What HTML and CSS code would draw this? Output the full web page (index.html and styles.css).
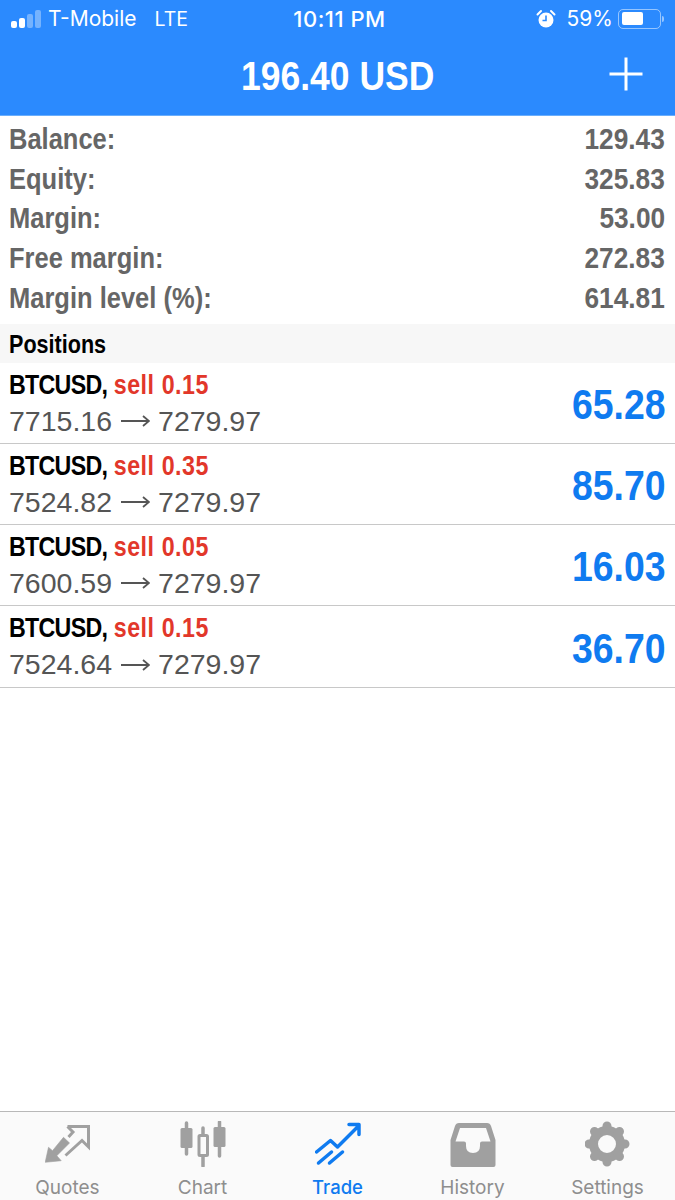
FILE: index.html
```html
<!DOCTYPE html>
<html lang="en">
<head>
  <meta charset="UTF-8" />
  <meta name="viewport" content="width=device-width, initial-scale=1.0" />
  <title>Trade</title>
  <link rel="stylesheet" href="styles.css">
</head>
<body>
  <header class="top">
    <div class="status">
      <div class="status-left">
        <span class="signal"><i class="on"></i><i class="on"></i><i></i><i></i></span>
        <span class="carrier">T-Mobile</span>
        <span class="net">LTE</span>
      </div>
      <div class="clock">10:11 PM</div>
      <div class="status-right">
        <svg class="alarm" width="20" height="20" viewBox="0 0 20 20">
          <circle cx="10" cy="11" r="7.5" fill="#fff"/>
          <path d="M1.5 5.5 L5 2 M18.5 5.5 L15 2" stroke="#fff" stroke-width="2" stroke-linecap="round"/>
          <path d="M10 6.5 V11.5 H6.5" stroke="#2b8afe" stroke-width="1.6" fill="none"/>
        </svg>
        <span class="pct">59%</span>
        <span class="battery"><span class="battery-fill"></span></span>
        <span class="battery-cap"></span>
      </div>
    </div>
    <div class="title-row">
      <h1>196.40 USD</h1>
      <svg class="plus" width="34" height="34" viewBox="0 0 34 34">
        <path d="M17 0.5 V33.5 M0.5 17 H33.5" stroke="#fff" stroke-width="3"/>
      </svg>
    </div>
  </header>

  <section class="summary">
    <div class="sum-row"><span class="sum-label">Balance:</span><span class="sum-value">129.43</span></div>
    <div class="sum-row"><span class="sum-label">Equity:</span><span class="sum-value">325.83</span></div>
    <div class="sum-row"><span class="sum-label">Margin:</span><span class="sum-value">53.00</span></div>
    <div class="sum-row"><span class="sum-label">Free margin:</span><span class="sum-value">272.83</span></div>
    <div class="sum-row"><span class="sum-label">Margin level (%):</span><span class="sum-value">614.81</span></div>
  </section>

  <div class="section-head"><span>Positions</span></div>

  <section class="positions">
    <div class="pos">
      <div class="pos-info">
        <div class="pos-title"><span class="symbol">BTCUSD,</span> <span class="sell">sell 0.15</span></div>
        <div class="pos-price">7715.16<svg class="arrow" width="30" height="14" viewBox="0 0 30 14"><path d="M1 7 H29 M23 2 L29 7 L23 12" fill="none" stroke="#555" stroke-width="1.800"/></svg>7279.97</div>
      </div>
      <div class="profit">65.28</div>
    </div>
    <div class="pos">
      <div class="pos-info">
        <div class="pos-title"><span class="symbol">BTCUSD,</span> <span class="sell">sell 0.35</span></div>
        <div class="pos-price">7524.82<svg class="arrow" width="30" height="14" viewBox="0 0 30 14"><path d="M1 7 H29 M23 2 L29 7 L23 12" fill="none" stroke="#555" stroke-width="1.800"/></svg>7279.97</div>
      </div>
      <div class="profit">85.70</div>
    </div>
    <div class="pos">
      <div class="pos-info">
        <div class="pos-title"><span class="symbol">BTCUSD,</span> <span class="sell">sell 0.05</span></div>
        <div class="pos-price">7600.59<svg class="arrow" width="30" height="14" viewBox="0 0 30 14"><path d="M1 7 H29 M23 2 L29 7 L23 12" fill="none" stroke="#555" stroke-width="1.800"/></svg>7279.97</div>
      </div>
      <div class="profit">16.03</div>
    </div>
    <div class="pos">
      <div class="pos-info">
        <div class="pos-title"><span class="symbol">BTCUSD,</span> <span class="sell">sell 0.15</span></div>
        <div class="pos-price">7524.64<svg class="arrow" width="30" height="14" viewBox="0 0 30 14"><path d="M1 7 H29 M23 2 L29 7 L23 12" fill="none" stroke="#555" stroke-width="1.800"/></svg>7279.97</div>
      </div>
      <div class="profit">36.70</div>
    </div>
  </section>

  <nav class="tabs">
    <div class="tab">
      <svg width="46" height="46" viewBox="0 0 46 46">
        <path d="M0.200 41.300 L3.500 26.300 L7.500 29.700 L18.500 16.300 L24.500 22 L11.800 34.700 L16.200 39.700 Z" fill="#a0a0a0" stroke="#a0a0a0" stroke-width="0.600"/>
        <path d="M22.500 5.500 H43.500 V26 L37 19.500 L20.500 34.500 M22.500 5.500 L28 11 L23.500 16" fill="none" stroke="#a0a0a0" stroke-width="3"/>
      </svg>
      <span>Quotes</span>
    </div>
    <div class="tab">
      <svg width="46" height="46" viewBox="0 0 46 46">
        <path d="M6.500 2 V33 M39.500 1 V35 M23 7 V45" stroke="#a0a0a0" stroke-width="3.500" stroke-linecap="round"/>
        <rect x="0.500" y="7" width="12" height="20" rx="1.500" fill="#a0a0a0"/>
        <rect x="33.500" y="6" width="12" height="20" rx="1.500" fill="#a0a0a0"/>
        <rect x="19" y="14.500" width="8.500" height="20" rx="1" fill="#fafafa" stroke="#a0a0a0" stroke-width="3"/>
      </svg>
      <span>Chart</span>
    </div>
    <div class="tab active">
      <svg width="46" height="46" viewBox="0 0 46 46">
        <path d="M1.500 31 L15.500 19.500 L22.500 26 L43 5.500 M34 3.500 H44 V13.500" stroke="#0f7bf0" stroke-width="3.500" fill="none" stroke-linecap="round" stroke-linejoin="round"/>
        <path d="M3.500 42 L16.500 31 M14.500 42 L27.500 31" stroke="#0f7bf0" stroke-width="3.500" fill="none" stroke-linecap="round"/>
      </svg>
      <span>Trade</span>
    </div>
    <div class="tab">
      <svg width="46" height="46" viewBox="0 0 46 46">
        <path fill-rule="evenodd" fill="#a0a0a0" d="M9 2 H37 Q40 2 41 5 L45.500 19 V44 Q45.500 46 43.500 46 H2.500 Q0.500 46 0.500 44 V19 L5 5 Q6 2 9 2 Z M10 7 L5.500 20.500 H14 Q16 20.500 16 22.500 V25 Q16 32 23 32 Q30 32 30 25 V22.500 Q30 20.500 32 20.500 H40.500 L36 7 Z"/>
      </svg>
      <span>History</span>
    </div>
    <div class="tab">
      <svg width="46" height="46" viewBox="0 0 46 46">
        <circle cx="22" cy="23" r="13.500" fill="none" stroke="#a0a0a0" stroke-width="9"/>
        <path d="M22 5 V7 M22 39 V41 M4 23 H6 M38 23 H40 M9.500 10.500 L11 12 M33 34 L34.500 35.500 M34.500 10.500 L33 12 M11 34 L9.500 35.500" stroke="#a0a0a0" stroke-width="9" stroke-linecap="round"/>
      </svg>
      <span>Settings</span>
    </div>
  </nav>
</body>
</html>
```

FILE: styles.css
```css
html, body {
  margin: 0;
  padding: 0;
  background: #fff;
  font-family: "Liberation Sans", Arial, sans-serif;
}
body {
  width: 675px;
  height: 1200px;
  display: flex;
  flex-direction: column;
  overflow: hidden;
}

/* blue top */
.top {
  background: #2b8afe;
  color: #fff;
  height: 115px;
  border-bottom: 1px solid #6aaefc;
  flex: none;
}
.status {
  height: 37px;
  padding: 0 11px 0 11px;
  display: grid;
  grid-template-columns: 1fr auto 1fr;
  align-items: center;
  font-family: Inter, "Liberation Sans", sans-serif;
  font-size: 21px;
}
.status-left, .status-right {
  display: flex;
  align-items: center;
}
.status-right {
  justify-content: flex-end;
}
.signal {
  display: flex;
  align-items: flex-end;
  gap: 2px;
  height: 18px;
  margin-right: 7px;
}
.signal i {
  width: 6px;
  background: rgba(255, 255, 255, 0.35);
  border-radius: 2px;
}
.signal i.on {
  background: #fff;
}
.signal i:nth-child(1) { height: 7px; }
.signal i:nth-child(2) { height: 10px; }
.signal i:nth-child(3) { height: 14px; }
.signal i:nth-child(4) { height: 18px; }
.net {
  margin-left: 18px;
  font-size: 19.500px;
}
.clock {
  font-size: 22px;
  font-weight: 500;
  letter-spacing: 0.5px;
  padding-left: 4px;
}
.alarm {
  margin-right: 11px;
}
.pct {
  margin-right: 5px;
}
.battery {
  width: 43px;
  height: 20px;
  border: 1.5px solid rgba(255, 255, 255, 0.5);
  border-radius: 5px;
  padding: 2.5px;
  box-sizing: border-box;
  display: block;
}
.battery-fill {
  display: block;
  width: 59%;
  height: 100%;
  background: #fff;
  border-radius: 2px;
}
.battery-cap {
  width: 2px;
  height: 6px;
  margin-left: 1px;
  background: rgba(255, 255, 255, 0.5);
  border-radius: 0 2px 2px 0;
}
.title-row {
  height: 78px;
  position: relative;
  display: flex;
  align-items: center;
  justify-content: center;
}
.title-row h1 {
  margin: 0;
  font-size: 41px;
  font-weight: bold;
  transform: scaleX(0.865);
}
.plus {
  position: absolute;
  right: 32px;
  top: 20px;
}

/* account summary */
.summary {
  padding: 3px 10px 6px 9px;
  flex: none;
}
.sum-row {
  display: flex;
  justify-content: space-between;
  align-items: center;
  height: 39.800px;
  font-size: 30px;
  font-weight: bold;
  color: #666;
}
.sum-label {
  transform: scaleX(0.85);
  transform-origin: left center;
}
.sum-value {
  transform: scaleX(0.875);
  transform-origin: right center;
}

.section-head {
  background: #f7f7f7;
  height: 39px;
  line-height: 41px;
  padding-left: 9px;
  font-size: 26px;
  font-weight: bold;
  color: #000;
  flex: none;
}
.section-head span {
  display: inline-block;
  transform: scaleX(0.83);
  transform-origin: left center;
}

/* position rows */
.pos {
  height: 80px;
  border-bottom: 1px solid #c8c8c8;
  padding: 0 9.500px 0 9px;
  display: flex;
  justify-content: space-between;
  align-items: center;
}
.pos:last-child {
  height: 81px;
}
.pos-title {
  font-size: 27px;
  font-weight: bold;
  color: #000;
  line-height: 36px;
  padding-top: 1px;
  transform: scaleX(0.86);
  transform-origin: left center;
  white-space: nowrap;
}
.symbol {
  letter-spacing: -0.83px;
}
.sell {
  color: #e2372a;
  letter-spacing: 0.65px;
}
.pos-price {
  font-size: 28.500px;
  line-height: 37px;
  color: #555;
  display: flex;
  align-items: center;
}
.arrow {
  margin: 0 8px 0 8px;
}
.profit {
  font-size: 43px;
  font-weight: bold;
  color: #0f7bf0;
  padding-top: 4px;
  transform: scaleX(0.87);
  transform-origin: right center;
}

/* bottom tabs */
.tabs {
  margin-top: auto;
  height: 88px;
  background: #fafafa;
  border-top: 1px solid #b8b8b8;
  display: grid;
  grid-template-columns: repeat(5, 135px);
  flex: none;
}
.tab {
  display: flex;
  flex-direction: column;
  align-items: center;
  font-family: Inter, "Liberation Sans", sans-serif;
  font-size: 19px;
  color: #8e8e8e;
  padding-top: 9px;
  gap: 9px;
  overflow: hidden;
}
.tab svg {
  flex: none;
}
.tab.active {
  color: #0f7bf0;
  font-weight: 500;
  font-size: 18.500px;
}
```
